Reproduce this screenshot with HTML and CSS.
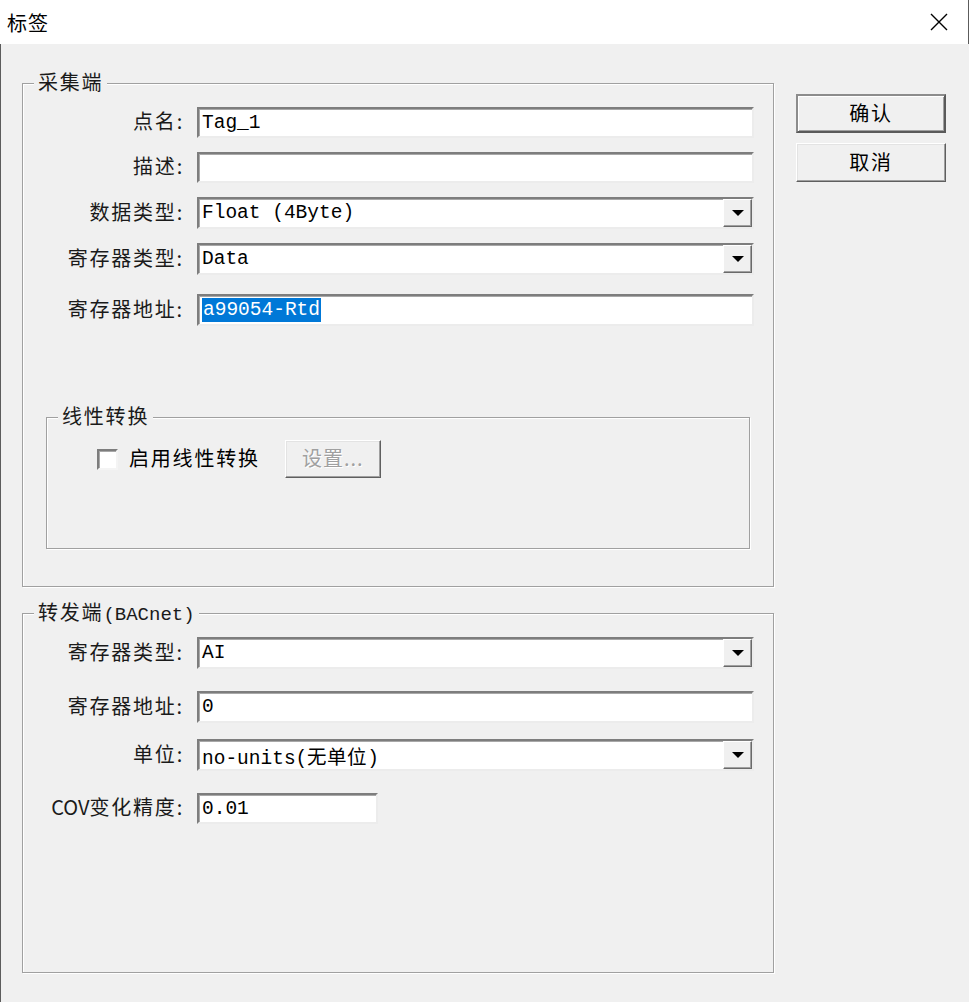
FILE: index.html
```html
<!DOCTYPE html>
<html lang="zh-CN">
<head>
    <meta charset="UTF-8">
    <title>标签</title>
    <link rel="stylesheet" href="styles.css">
</head>
<body>
    <header class="titlebar">
        <span class="title">标签</span>
        <svg class="close" viewBox="0 0 18 18" aria-hidden="true">
            <path d="M1 1 L17 17 M17 1 L1 17" stroke="#000" stroke-width="1.4" fill="none"/>
        </svg>
    </header>

    <div class="dialog">
        <div class="groups">
            <!-- 采集端 -->
            <div class="group group-collect">
                <span class="legend">采集端</span>
                <div class="field">
                    <span class="label">点名:</span>
                    <div class="edit">Tag_1</div>
                </div>
                <div class="field">
                    <span class="label">描述:</span>
                    <div class="edit"></div>
                </div>
                <div class="field tall">
                    <span class="label">数据类型:</span>
                    <div class="combo">
                        <span class="combo-value">Float (4Byte)</span>
                        <span class="combo-arrow"><svg viewBox="0 0 12 6"><path d="M0 0 H12 L6 6 Z" fill="#000"/></svg></span>
                    </div>
                </div>
                <div class="field tall">
                    <span class="label">寄存器类型:</span>
                    <div class="combo">
                        <span class="combo-value">Data</span>
                        <span class="combo-arrow"><svg viewBox="0 0 12 6"><path d="M0 0 H12 L6 6 Z" fill="#000"/></svg></span>
                    </div>
                </div>
                <div class="field tall spaced">
                    <span class="label">寄存器地址:</span>
                    <div class="edit"><span class="selected">a99054-Rtd</span></div>
                </div>

                <div class="group group-linear">
                    <span class="legend">线性转换</span>
                    <div class="check-row">
                        <span class="checkbox"></span>
                        <span class="check-label">启用线性转换</span>
                        <button class="btn btn-disabled">设置...</button>
                    </div>
                </div>
            </div>

            <!-- 转发端 -->
            <div class="group group-forward">
                <span class="legend">转发端<span class="latin">(BACnet)</span></span>
                <div class="field tall">
                    <span class="label">寄存器类型:</span>
                    <div class="combo">
                        <span class="combo-value">AI</span>
                        <span class="combo-arrow"><svg viewBox="0 0 12 6"><path d="M0 0 H12 L6 6 Z" fill="#000"/></svg></span>
                    </div>
                </div>
                <div class="field tall wide-gap">
                    <span class="label">寄存器地址:</span>
                    <div class="edit">0</div>
                </div>
                <div class="field tall">
                    <span class="label">单位:</span>
                    <div class="combo">
                        <span class="combo-value">no-units(无单位)</span>
                        <span class="combo-arrow"><svg viewBox="0 0 12 6"><path d="M0 0 H12 L6 6 Z" fill="#000"/></svg></span>
                    </div>
                </div>
                <div class="field wide-gap">
                    <span class="label"><span class="tight">COV</span>变化精度:</span>
                    <div class="edit edit-short">0.01</div>
                </div>
            </div>
        </div>

        <div class="actions">
            <button class="btn btn-default">确认</button>
            <button class="btn">取消</button>
        </div>
    </div>
</body>
</html>
```

FILE: styles.css
```css
body {
    margin: 0;
    background-color: #f0f0f0;
    font-family: "Noto Sans CJK SC", sans-serif;
    color: #1a1a1a;
}
.titlebar {
    height: 44px;
    background-color: #fff;
    display: flex;
    align-items: center;
    justify-content: space-between;
    padding: 0 20px 0 7px;
    border-right: 1px solid #5c5c5c;
    box-sizing: border-box;
}
.title {
    font-size: 20px;
    letter-spacing: 1px;
    color: #000;
}
.close {
    width: 18px;
    height: 18px;
}
.dialog {
    display: flex;
    gap: 22px;
    height: 958px;
    padding: 39px 0 0 21px;
    border-left: 1px solid #5c5c5c;
    box-sizing: border-box;
}
.groups {
    width: 752px;
    flex: none;
}
.group {
    position: relative;
    border: 1px solid #a0a0a0;
    box-shadow: inset 1px 1px 0 #fff, 1px 1px 0 #fff;
}
.legend {
    position: absolute;
    top: -15px;
    left: 11px;
    padding: 0 4px;
    line-height: 26px;
    font-size: 20px;
    letter-spacing: 1.8px;
    background-color: #f0f0f0;
    color: #1a1a1a;
}
.legend .latin {
    font-family: "Liberation Mono", monospace;
    font-size: 19px;
    letter-spacing: 0;
}
.group-collect {
    padding: 23px 0 0;
}
.group-forward {
    margin-top: 26px;
    padding: 23px 0 148px;
}
.group-linear {
    margin: 91px 23px 37px;
    padding: 22px 0 70px 50px;
}
.field {
    display: flex;
    align-items: center;
    height: 31px;
}
.field + .field {
    margin-top: 14px;
}
.field.tall {
    height: 32px;
}
.field.spaced {
    margin-top: 19px;
}
.group-forward .field + .field {
    margin-top: 16px;
}
.group-forward .field.wide-gap {
    margin-top: 22px;
}
.label {
    width: 161px;
    margin-right: 13px;
    padding-bottom: 4px;
    flex: none;
    text-align: right;
    font-size: 20px;
    letter-spacing: 1.8px;
    white-space: nowrap;
}
.label .tight {
    letter-spacing: 0;
}
.edit,
.combo {
    width: 557px;
    height: 100%;
    box-sizing: border-box;
    background-color: #fff;
    border: 2px solid;
    border-color: #7d7d7d #ececec #ececec #7d7d7d;
    box-shadow: inset 1px 1px 0 #a8a8a8;
    font-family: "Liberation Mono", monospace;
    font-size: 19.5px;
    color: #000;
    display: flex;
    align-items: center;
    padding-left: 3px;
    white-space: pre;
}
.edit-short {
    width: 181px;
}
.combo {
    padding-right: 0;
}
.combo-value {
    flex: 1;
}
.combo-arrow {
    width: 29px;
    height: 100%;
    box-sizing: border-box;
    background-color: #f0f0f0;
    border: 1px solid;
    border-color: #fff #6a6a6a #6a6a6a #fff;
    box-shadow: inset -1px -1px 0 #a0a0a0;
    display: flex;
    align-items: center;
    justify-content: center;
}
.combo-arrow svg {
    width: 12px;
    height: 6px;
}
.selected {
    background-color: #0078d7;
    color: #fff;
    padding: 0 1px;
    line-height: 24px;
}
.check-row {
    display: flex;
    align-items: center;
    height: 38px;
}
.checkbox {
    width: 21px;
    height: 21px;
    box-sizing: border-box;
    background-color: #fff;
    border: 2px solid;
    border-color: #7d7d7d #f4f4f4 #f4f4f4 #7d7d7d;
    box-shadow: inset 1px 1px 0 #a8a8a8;
    margin-right: 11px;
}
.check-label {
    font-size: 20px;
    letter-spacing: 1.8px;
    color: #000;
    margin-right: 25px;
    padding-bottom: 4px;
}
.btn {
    box-sizing: border-box;
    background-color: #f0f0f0;
    border: 1px solid;
    border-color: #fff #5f5f5f #5f5f5f #fff;
    box-shadow: inset -1px -1px 0 #a0a0a0, inset 1px 1px 0 #e3e3e3;
    font-family: "Noto Sans CJK SC", sans-serif;
    font-size: 20px;
    letter-spacing: 1.8px;
    color: #000;
    padding: 0 0 3px;
    height: 39px;
}
.btn-default {
    border: 2px solid;
    border-color: #8c8c8c #5a5a5a #5a5a5a #8c8c8c;
    box-shadow: inset 1px 1px 0 #fff, inset -1px -1px 0 #a0a0a0;
}
.btn-disabled {
    width: 96px;
    height: 38px;
    color: #a0a0a0;
    text-shadow: 1px 1px 0 #fff;
    letter-spacing: 1px;
}
.actions {
    width: 150px;
    margin-top: 11px;
    display: flex;
    flex-direction: column;
    gap: 10px;
}
```
